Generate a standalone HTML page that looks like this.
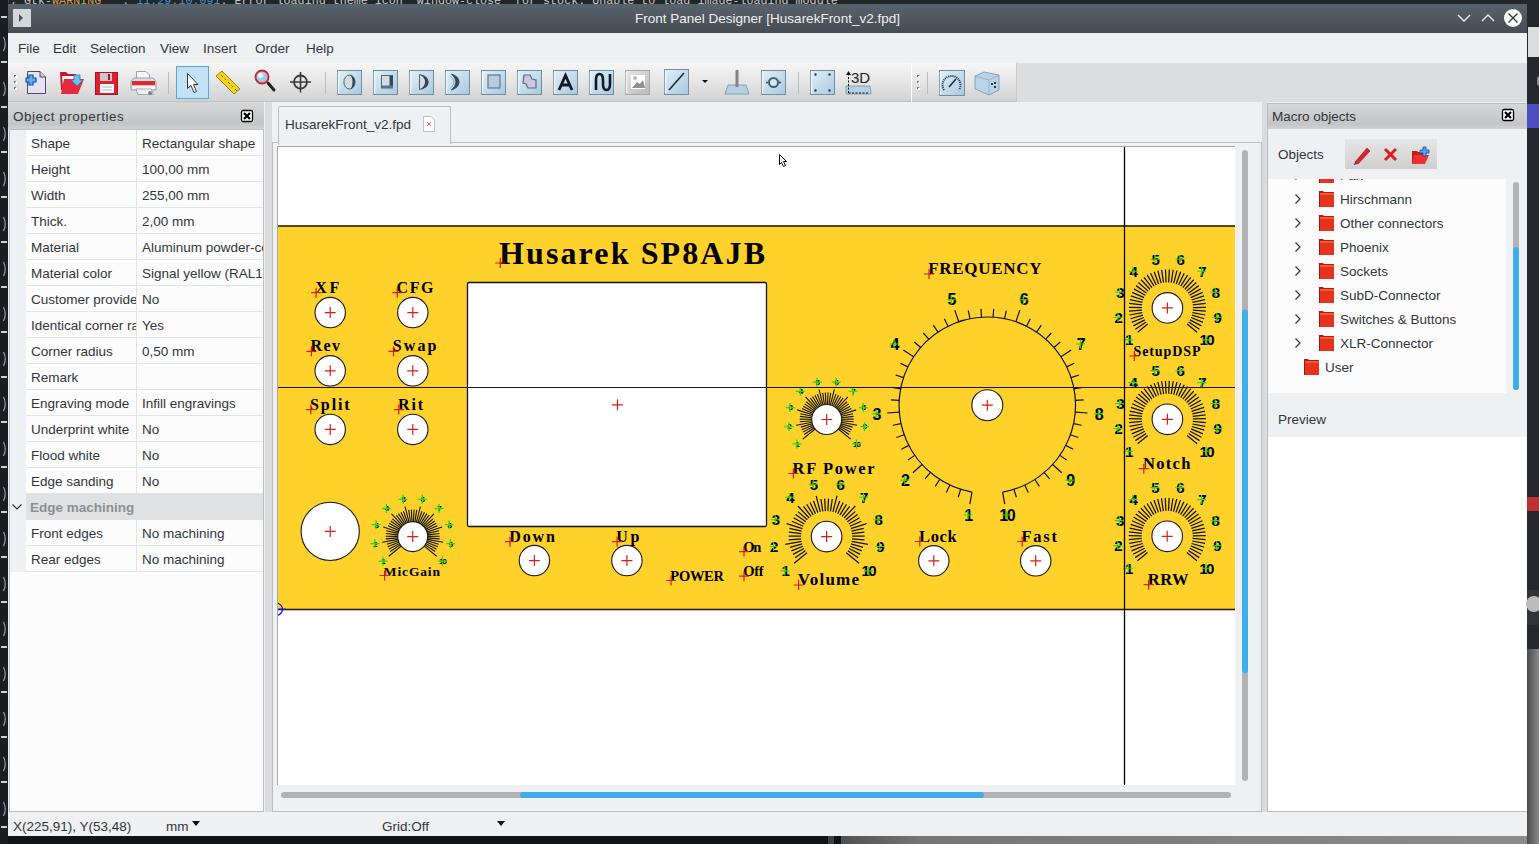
<!DOCTYPE html>
<html><head><meta charset="utf-8">
<style>
*{box-sizing:border-box}
body{margin:0;width:1539px;height:844px;position:relative;overflow:hidden;background:#1f2226;font-family:"Liberation Sans",sans-serif;font-size:13.5px;color:#31363b}
.a{position:absolute}
.t{position:absolute;white-space:nowrap;line-height:18px}
</style></head><body>
<div class="a" style="left:0;top:0;width:1539px;height:4px;overflow:hidden;background:#232629">
  <div class="t" style="left:3px;top:-8px;color:#c8c8c8;font-family:'Liberation Mono',monospace;font-size:11.7px">); Gtk-<span style="color:#d0a040">WARNING</span> **: <span style="color:#4a90d0">11:29:10.091</span>: Error loading theme icon 'window-close' for stock: Unable to load image-loading module</div>
</div>
<div class="a" style="left:8px;top:4px;width:1519px;height:832px;background:#eff0f1"></div>
<div class="a" style="left:8px;top:4px;width:1519px;height:29px;background:linear-gradient(#59626b,#454c53)"></div>
<div class="a" style="left:13px;top:9px;width:18px;height:18px;background:#d2d7dc"><div class="a" style="left:6px;top:5px;width:0;height:0;border-top:4px solid transparent;border-bottom:4px solid transparent;border-left:4px solid #4a4f55"></div></div>
<div class="t" style="left:8px;width:1519px;text-align:center;top:10px;color:#eff0f1">Front Panel Designer [HusarekFront_v2.fpd]</div>
<svg class="a" style="left:1448px;top:7px" width="79" height="22">
  <polyline points="10,8 16,14 22,8" fill="none" stroke="#eff0f1" stroke-width="1.3"/>
  <polyline points="34,14 40,8 46,14" fill="none" stroke="#eff0f1" stroke-width="1.3"/>
  <circle cx="65" cy="11" r="9" fill="#fcfcfc"/>
  <path d="M60.5,6.5L69.5,15.5M69.5,6.5L60.5,15.5" stroke="#31363b" stroke-width="1.3"/>
</svg>
<div class="t" style="left:18px;top:40px">File</div>
<div class="t" style="left:53px;top:40px">Edit</div>
<div class="t" style="left:90px;top:40px">Selection</div>
<div class="t" style="left:160px;top:40px">View</div>
<div class="t" style="left:203px;top:40px">Insert</div>
<div class="t" style="left:255px;top:40px">Order</div>
<div class="t" style="left:306px;top:40px">Help</div>
<div class="a" style="left:8px;top:63px;width:1519px;height:39px;background:#dcddde"></div>
<div class="a" style="left:8px;top:63px;width:903px;height:39px;background:linear-gradient(#f6f6f6,#e4e4e4 55%,#d2d2d2);border-bottom:1px solid #c2c2c2"></div>
<div class="a" style="left:911px;top:63px;width:1px;height:39px;background:#fff"></div>
<div class="a" style="left:912px;top:63px;width:105px;height:39px;background:linear-gradient(#f6f6f6,#e4e4e4 55%,#d2d2d2);border-bottom:1px solid #c2c2c2;border-right:1px solid #c8c8c8"></div>
<svg class="a" style="left:0;top:0" width="1539" height="110">
<defs>
<linearGradient id="bb" x1="0" y1="0" x2="1" y2="1"><stop offset="0" stop-color="#e4f0f8"/><stop offset="1" stop-color="#a9c8de"/></linearGradient>
<linearGradient id="gb" x1="0" y1="0" x2="1" y2="1"><stop offset="0" stop-color="#e8e8e8"/><stop offset="1" stop-color="#b8b8b8"/></linearGradient>
</defs>
<rect x="917" y="75" width="2" height="2" fill="#777"/>
<rect x="918" y="76" width="2" height="2" fill="#fff"/>
<rect x="14" y="75" width="2" height="2" fill="#777"/>
<rect x="15" y="76" width="2" height="2" fill="#fff"/>
<rect x="917" y="81" width="2" height="2" fill="#777"/>
<rect x="918" y="82" width="2" height="2" fill="#fff"/>
<rect x="14" y="81" width="2" height="2" fill="#777"/>
<rect x="15" y="82" width="2" height="2" fill="#fff"/>
<rect x="917" y="87" width="2" height="2" fill="#777"/>
<rect x="918" y="88" width="2" height="2" fill="#fff"/>
<rect x="14" y="87" width="2" height="2" fill="#777"/>
<rect x="15" y="88" width="2" height="2" fill="#fff"/>
<path d="M27.5,71.5H40L45.5,77V93.5H27.5Z" fill="#e6e2f6" stroke="#4a4a60" stroke-width="1"/>
<path d="M40,71.5V77H45.5" fill="#cfcbe0" stroke="#4a4a60" stroke-width="1"/>
<path d="M26,78H29V75H33V78H36V82H33V85H29V82H26Z" fill="#5ab0f0" stroke="#1c4fa0" stroke-width="1.2"/>
<path d="M60,72H66L68,74H76V90H61Z" fill="#c0182c"/>
<path d="M62,76H75V88H63Z" fill="#f4f4f4"/>
<path d="M64,79H84L78,94H61Z" fill="#e8283c"/>
<path d="M74,75H80V80H83L77,86L71,80H74Z" fill="#6ac0f0" stroke="#2a7ab0" stroke-width="0.8"/>
<rect x="95.5" y="72.5" width="22" height="22" fill="#e02030" stroke="#b01020"/>
<rect x="100" y="73" width="12" height="8" fill="#c8c8d0"/><rect x="108" y="74" width="2" height="6" fill="#b01020"/>
<rect x="100" y="84" width="14" height="9" fill="#fafafa"/><path d="M102,87H112M102,90H112" stroke="#9ab" stroke-width="0.8"/>
<path d="M136.5,71.5H146L149.5,75V82H136.5Z" fill="#f4f4fa" stroke="#8a8a98" stroke-width="0.8"/>
<path d="M131,81L134,78H153L156,81V90H131Z" fill="#d8dce6" stroke="#8890a0" stroke-width="0.8"/>
<path d="M132,81H155V85.5H132Z" fill="#e02a30"/>
<path d="M132,85.5H155V89H132Z" fill="#f0f2f8"/>
<path d="M136,89H151L153.5,94.5H138Z" fill="#f4f4f4" stroke="#8a8a98" stroke-width="0.7"/>
<circle cx="150" cy="93" r="2" fill="#7a8088"/>
<path d="M168.5,72V94" stroke="#bcbcbc" stroke-width="1"/>
<path d="M325.5,72V94" stroke="#bcbcbc" stroke-width="1"/>
<path d="M798.5,72V94" stroke="#bcbcbc" stroke-width="1"/>
<path d="M927.5,72V94" stroke="#bcbcbc" stroke-width="1"/>
<rect x="176.5" y="66.5" width="32" height="32" fill="#c2e1f5" stroke="#5ba7d9" stroke-width="1"/>
<path d="M187.5,73.5V88.5L191,85.5L194,92.5L196.5,91.5L193.5,84.5H198Z" fill="#fafafa" stroke="#3a3a3a" stroke-width="1"/>
<path d="M216,76L222,71L240,89L234,94Z" fill="#f2d21a" stroke="#9a7a00" stroke-width="0.9"/>
<path d="M221,75L223,77M224.5,78.5L226,80M228,82L230,84M231.5,85.5L233,87M235,89L237,91" stroke="#6a5a00" stroke-width="0.8"/>
<path d="M268,83L274,90" stroke="#222" stroke-width="3" stroke-linecap="round"/>
<circle cx="262" cy="77" r="6.5" fill="#9ecde8" stroke="#d02030" stroke-width="1.8"/>
<circle cx="260.5" cy="75.5" r="2.5" fill="#e8f6ff"/>
<circle cx="300.5" cy="82" r="6.5" fill="none" stroke="#3a3a3a" stroke-width="1.8"/>
<path d="M290,82H311M300.5,72V92.5" stroke="#3a3a3a" stroke-width="1.6"/>
<rect x="337.5" y="70.5" width="24" height="24" fill="url(#bb)" stroke="#6f8ea2" stroke-width="1"/>
<path d="M338.5,71.5V93.5" stroke="#f5fbff" stroke-width="1.5" opacity="0.8"/>
<rect x="373.5" y="70.5" width="24" height="24" fill="url(#bb)" stroke="#6f8ea2" stroke-width="1"/>
<path d="M374.5,71.5V93.5" stroke="#f5fbff" stroke-width="1.5" opacity="0.8"/>
<rect x="409.5" y="70.5" width="24" height="24" fill="url(#bb)" stroke="#6f8ea2" stroke-width="1"/>
<path d="M410.5,71.5V93.5" stroke="#f5fbff" stroke-width="1.5" opacity="0.8"/>
<rect x="445.5" y="70.5" width="24" height="24" fill="url(#bb)" stroke="#6f8ea2" stroke-width="1"/>
<path d="M446.5,71.5V93.5" stroke="#f5fbff" stroke-width="1.5" opacity="0.8"/>
<rect x="481.5" y="70.5" width="24" height="24" fill="url(#bb)" stroke="#6f8ea2" stroke-width="1"/>
<path d="M482.5,71.5V93.5" stroke="#f5fbff" stroke-width="1.5" opacity="0.8"/>
<rect x="517.5" y="70.5" width="24" height="24" fill="url(#bb)" stroke="#6f8ea2" stroke-width="1"/>
<path d="M518.5,71.5V93.5" stroke="#f5fbff" stroke-width="1.5" opacity="0.8"/>
<rect x="553.5" y="70.5" width="24" height="24" fill="url(#bb)" stroke="#6f8ea2" stroke-width="1"/>
<path d="M554.5,71.5V93.5" stroke="#f5fbff" stroke-width="1.5" opacity="0.8"/>
<rect x="589.5" y="70.5" width="24" height="24" fill="url(#bb)" stroke="#6f8ea2" stroke-width="1"/>
<path d="M590.5,71.5V93.5" stroke="#f5fbff" stroke-width="1.5" opacity="0.8"/>
<ellipse cx="349.5" cy="82" rx="5.6" ry="7" fill="#d6dde2" stroke="#4a6476" stroke-width="1"/>
<path d="M349.5,75A5.6,7 0 0 1 349.5,89A2.8,6.6 0 0 0 349.5,75Z" fill="#2f4a5c"/>
<rect x="381.5" y="75.5" width="11" height="12.5" fill="#d6dde2" stroke="#4a6476" stroke-width="1"/>
<path d="M389.5,76V88H393V76Z" fill="#2f4a5c"/><path d="M382,85.5H393V88H382Z" fill="#5a7486"/>
<path d="M419.5,74.5Q428,76 428,82Q428,88 419.5,89.5Z" fill="#d6dde2" stroke="#4a6476" stroke-width="1"/>
<path d="M419.5,74.5Q428.5,76 428.5,82Q428.5,88 419.5,89.5Q425,87 425,82Q425,77 419.5,74.5Z" fill="#2f4a5c"/>
<path d="M451.5,74Q459,76.5 459,82Q459,87.5 451.5,90Q456,86 456,82Q456,78 451.5,74Z" fill="#2f4a5c" stroke="#2f4a5c" stroke-width="1"/>
<path d="M450,75.5Q454,79 454,82Q454,85 450,88.5" fill="none" stroke="#8aa2b2" stroke-width="1"/>
<rect x="488" y="75" width="12" height="13" fill="#b4ccdc" stroke="#5a7a8e" stroke-width="1.2"/>
<path d="M524,75H530L532,79L536,80V88H528L526,84L523,83Z" fill="#c8c8e0" stroke="#5a6a8e" stroke-width="1.2"/>
<path d="M559,90L565.5,75.5L572,90M561.5,85H569.5" fill="none" stroke="#0e1a28" stroke-width="2.8"/>
<path d="M596,90V80Q596,74 599.5,74Q603,74 603,80V84Q603,90 606.5,90Q610,90 610,84V74" fill="none" stroke="#0e1a28" stroke-width="2.6"/>
<rect x="625.5" y="70.5" width="24" height="24" fill="url(#gb)" stroke="#a8a8a8" stroke-width="1"/>
<path d="M626.5,71.5V93.5" stroke="#f5fbff" stroke-width="1.5" opacity="0.8"/>
<rect x="631" y="75" width="14" height="14" fill="#fff"/><path d="M632,88L637,82L640,84L643,80L645,88Z" fill="#909090"/><circle cx="635" cy="78" r="2" fill="#bbb"/>
<rect x="664.5" y="69.5" width="24" height="25" fill="url(#bb)" stroke="#6f8ea2" stroke-width="1"/>
<path d="M665.5,70.5V93.5" stroke="#f5fbff" stroke-width="1.5" opacity="0.8"/>
<path d="M669,90L684,73" stroke="#1a2a3a" stroke-width="1.6"/>
<path d="M702,80H708L705,83Z" fill="#111"/>
<path d="M728,85H746L749,94H725Z" fill="#b4d0e4" stroke="#7893a6" stroke-width="0.8"/>
<rect x="735.5" y="70" width="3" height="17" fill="#808488"/>
<rect x="761.5" y="70.5" width="24" height="24" fill="url(#bb)" stroke="#6f8ea2" stroke-width="1"/>
<path d="M762.5,71.5V93.5" stroke="#f5fbff" stroke-width="1.5" opacity="0.8"/>
<circle cx="773.5" cy="82.5" r="4.5" fill="#d8e8f2" stroke="#3f6074" stroke-width="2"/>
<circle cx="767" cy="82.5" r="1" fill="#2a3a4a"/><circle cx="780" cy="82.5" r="1" fill="#2a3a4a"/>
<rect x="810.5" y="70.5" width="24" height="24" fill="url(#bb)" stroke="#6f8ea2" stroke-width="1"/>
<path d="M811.5,71.5V93.5" stroke="#f5fbff" stroke-width="1.5" opacity="0.8"/>
<circle cx="815.5" cy="74.5" r="1.2" fill="#2a3a4a"/>
<circle cx="829.5" cy="74.5" r="1.2" fill="#2a3a4a"/>
<circle cx="815.5" cy="90.5" r="1.2" fill="#2a3a4a"/>
<circle cx="829.5" cy="90.5" r="1.2" fill="#2a3a4a"/>
<path d="M846,86H870L871,94H846Z" fill="#b4d0e4" stroke="#7893a6" stroke-width="0.8"/>
<path d="M848.5,93V73M848.5,93H869" fill="none" stroke="#111" stroke-width="1" stroke-dasharray="2,1.5"/>
<path d="M846,75L848.5,71L851,75Z" fill="#111"/>
<text x="851" y="83" font-family="Liberation Sans" font-size="15" fill="#222">3D</text>
<rect x="939.5" y="70.5" width="25" height="25" fill="url(#bb)" stroke="#6f8ea2" stroke-width="1"/>
<path d="M940.5,71.5V94.5" stroke="#f5fbff" stroke-width="1.5" opacity="0.8"/>
<path d="M944,90A9,9 0 1 1 959,90" fill="none" stroke="#1a2a3a" stroke-width="2" stroke-dasharray="1,1"/>
<path d="M949,87L956,79" stroke="#1a2a3a" stroke-width="1.5"/>
<path d="M975,76L984,72L999,75V90L989,95L975,89Z" fill="#b8d4e8" stroke="#7893a6" stroke-width="0.8"/>
<path d="M989,80V95M975,76L989,80L999,75" fill="none" stroke="#8aa8bc" stroke-width="0.8"/>
<rect x="991" y="83" width="2" height="2" fill="#334"/><rect x="994" y="82" width="2" height="2" fill="#334"/><rect x="994" y="86" width="2" height="2" fill="#334"/>
</svg>
<!-- left dock -->
<div class="a" style="left:8px;top:102px;width:256px;height:27px;background:linear-gradient(#d6d7d8,#c4c5c6 80%,#d0d1d2)"></div>
<div class="t" style="left:13px;top:108px;letter-spacing:0.5px">Object properties</div>
<svg class="a" style="left:240px;top:109px" width="14" height="14"><rect x="1.5" y="1.5" width="11" height="11" rx="1.5" fill="#fff" stroke="#000" stroke-width="1.3"/><path d="M4,4L10,10M10,4L4,10" stroke="#000" stroke-width="2.2"/></svg>
<div class="a" style="left:9px;top:129px;width:255px;height:683px;background:#fcfcfc;border:1px solid #bcbdbe"></div>
<div class="a" style="left:10px;top:130px;width:16px;height:442px;background:#eff0f1"></div>
<div class="a" style="left:26px;top:155px;width:237px;height:1px;background:#e3e4e5"></div>
<div class="a" style="left:136px;top:130px;width:1px;height:26px;background:#e3e4e5"></div>
<div class="a" style="left:26px;top:130px;width:110px;height:26px;overflow:hidden"><div class="t" style="left:5px;top:5px">Shape</div></div>
<div class="a" style="left:137px;top:130px;width:126px;height:26px;overflow:hidden"><div class="t" style="left:5px;top:5px">Rectangular shape</div></div>
<div class="a" style="left:26px;top:181px;width:237px;height:1px;background:#e3e4e5"></div>
<div class="a" style="left:136px;top:156px;width:1px;height:26px;background:#e3e4e5"></div>
<div class="a" style="left:26px;top:156px;width:110px;height:26px;overflow:hidden"><div class="t" style="left:5px;top:5px">Height</div></div>
<div class="a" style="left:137px;top:156px;width:126px;height:26px;overflow:hidden"><div class="t" style="left:5px;top:5px">100,00 mm</div></div>
<div class="a" style="left:26px;top:207px;width:237px;height:1px;background:#e3e4e5"></div>
<div class="a" style="left:136px;top:182px;width:1px;height:26px;background:#e3e4e5"></div>
<div class="a" style="left:26px;top:182px;width:110px;height:26px;overflow:hidden"><div class="t" style="left:5px;top:5px">Width</div></div>
<div class="a" style="left:137px;top:182px;width:126px;height:26px;overflow:hidden"><div class="t" style="left:5px;top:5px">255,00 mm</div></div>
<div class="a" style="left:26px;top:233px;width:237px;height:1px;background:#e3e4e5"></div>
<div class="a" style="left:136px;top:208px;width:1px;height:26px;background:#e3e4e5"></div>
<div class="a" style="left:26px;top:208px;width:110px;height:26px;overflow:hidden"><div class="t" style="left:5px;top:5px">Thick.</div></div>
<div class="a" style="left:137px;top:208px;width:126px;height:26px;overflow:hidden"><div class="t" style="left:5px;top:5px">2,00 mm</div></div>
<div class="a" style="left:26px;top:259px;width:237px;height:1px;background:#e3e4e5"></div>
<div class="a" style="left:136px;top:234px;width:1px;height:26px;background:#e3e4e5"></div>
<div class="a" style="left:26px;top:234px;width:110px;height:26px;overflow:hidden"><div class="t" style="left:5px;top:5px">Material</div></div>
<div class="a" style="left:137px;top:234px;width:126px;height:26px;overflow:hidden"><div class="t" style="left:5px;top:5px">Aluminum powder-coated</div></div>
<div class="a" style="left:26px;top:285px;width:237px;height:1px;background:#e3e4e5"></div>
<div class="a" style="left:136px;top:260px;width:1px;height:26px;background:#e3e4e5"></div>
<div class="a" style="left:26px;top:260px;width:110px;height:26px;overflow:hidden"><div class="t" style="left:5px;top:5px">Material color</div></div>
<div class="a" style="left:137px;top:260px;width:126px;height:26px;overflow:hidden"><div class="t" style="left:5px;top:5px">Signal yellow (RAL1003)</div></div>
<div class="a" style="left:26px;top:311px;width:237px;height:1px;background:#e3e4e5"></div>
<div class="a" style="left:136px;top:286px;width:1px;height:26px;background:#e3e4e5"></div>
<div class="a" style="left:26px;top:286px;width:110px;height:26px;overflow:hidden"><div class="t" style="left:5px;top:5px">Customer provided</div></div>
<div class="a" style="left:137px;top:286px;width:126px;height:26px;overflow:hidden"><div class="t" style="left:5px;top:5px">No</div></div>
<div class="a" style="left:26px;top:337px;width:237px;height:1px;background:#e3e4e5"></div>
<div class="a" style="left:136px;top:312px;width:1px;height:26px;background:#e3e4e5"></div>
<div class="a" style="left:26px;top:312px;width:110px;height:26px;overflow:hidden"><div class="t" style="left:5px;top:5px">Identical corner radii</div></div>
<div class="a" style="left:137px;top:312px;width:126px;height:26px;overflow:hidden"><div class="t" style="left:5px;top:5px">Yes</div></div>
<div class="a" style="left:26px;top:363px;width:237px;height:1px;background:#e3e4e5"></div>
<div class="a" style="left:136px;top:338px;width:1px;height:26px;background:#e3e4e5"></div>
<div class="a" style="left:26px;top:338px;width:110px;height:26px;overflow:hidden"><div class="t" style="left:5px;top:5px">Corner radius</div></div>
<div class="a" style="left:137px;top:338px;width:126px;height:26px;overflow:hidden"><div class="t" style="left:5px;top:5px">0,50 mm</div></div>
<div class="a" style="left:26px;top:389px;width:237px;height:1px;background:#e3e4e5"></div>
<div class="a" style="left:136px;top:364px;width:1px;height:26px;background:#e3e4e5"></div>
<div class="a" style="left:26px;top:364px;width:110px;height:26px;overflow:hidden"><div class="t" style="left:5px;top:5px">Remark</div></div>
<div class="a" style="left:137px;top:364px;width:126px;height:26px;overflow:hidden"><div class="t" style="left:5px;top:5px"></div></div>
<div class="a" style="left:26px;top:415px;width:237px;height:1px;background:#e3e4e5"></div>
<div class="a" style="left:136px;top:390px;width:1px;height:26px;background:#e3e4e5"></div>
<div class="a" style="left:26px;top:390px;width:110px;height:26px;overflow:hidden"><div class="t" style="left:5px;top:5px">Engraving mode</div></div>
<div class="a" style="left:137px;top:390px;width:126px;height:26px;overflow:hidden"><div class="t" style="left:5px;top:5px">Infill engravings</div></div>
<div class="a" style="left:26px;top:441px;width:237px;height:1px;background:#e3e4e5"></div>
<div class="a" style="left:136px;top:416px;width:1px;height:26px;background:#e3e4e5"></div>
<div class="a" style="left:26px;top:416px;width:110px;height:26px;overflow:hidden"><div class="t" style="left:5px;top:5px">Underprint white</div></div>
<div class="a" style="left:137px;top:416px;width:126px;height:26px;overflow:hidden"><div class="t" style="left:5px;top:5px">No</div></div>
<div class="a" style="left:26px;top:467px;width:237px;height:1px;background:#e3e4e5"></div>
<div class="a" style="left:136px;top:442px;width:1px;height:26px;background:#e3e4e5"></div>
<div class="a" style="left:26px;top:442px;width:110px;height:26px;overflow:hidden"><div class="t" style="left:5px;top:5px">Flood white</div></div>
<div class="a" style="left:137px;top:442px;width:126px;height:26px;overflow:hidden"><div class="t" style="left:5px;top:5px">No</div></div>
<div class="a" style="left:26px;top:493px;width:237px;height:1px;background:#e3e4e5"></div>
<div class="a" style="left:136px;top:468px;width:1px;height:26px;background:#e3e4e5"></div>
<div class="a" style="left:26px;top:468px;width:110px;height:26px;overflow:hidden"><div class="t" style="left:5px;top:5px">Edge sanding</div></div>
<div class="a" style="left:137px;top:468px;width:126px;height:26px;overflow:hidden"><div class="t" style="left:5px;top:5px">No</div></div>
<div class="a" style="left:26px;top:494px;width:237px;height:26px;background:#e0e1e2"></div>
<svg class="a" style="left:11px;top:502px" width="12" height="10"><path d="M1.5,2.5L6,7L10.5,2.5" fill="none" stroke="#31363b" stroke-width="1.2"/></svg>
<div class="t" style="left:30px;top:499px;color:#8c8f92;font-weight:bold">Edge machining</div>
<div class="a" style="left:26px;top:545px;width:237px;height:1px;background:#e3e4e5"></div>
<div class="a" style="left:136px;top:520px;width:1px;height:26px;background:#e3e4e5"></div>
<div class="a" style="left:26px;top:520px;width:110px;height:26px;overflow:hidden"><div class="t" style="left:5px;top:5px">Front edges</div></div>
<div class="a" style="left:137px;top:520px;width:126px;height:26px;overflow:hidden"><div class="t" style="left:5px;top:5px">No machining</div></div>
<div class="a" style="left:26px;top:571px;width:237px;height:1px;background:#e3e4e5"></div>
<div class="a" style="left:136px;top:546px;width:1px;height:26px;background:#e3e4e5"></div>
<div class="a" style="left:26px;top:546px;width:110px;height:26px;overflow:hidden"><div class="t" style="left:5px;top:5px">Rear edges</div></div>
<div class="a" style="left:137px;top:546px;width:126px;height:26px;overflow:hidden"><div class="t" style="left:5px;top:5px">No machining</div></div>
<!-- splitter -->
<div class="a" style="left:265px;top:102px;width:7px;height:710px;background:#dadbdc"></div>
<!-- central -->
<div class="a" style="left:272px;top:142px;width:990px;height:670px;border:1px solid #bcbdbe;background:#eff0f1"></div>
<div class="a" style="left:278px;top:106px;width:173px;height:38px;background:#eff0f1;border:1px solid #bcbdbe;border-bottom:none;border-radius:2px 2px 0 0"></div>
<div class="t" style="left:285px;top:116px">HusarekFront_v2.fpd</div>
<svg class="a" style="left:421px;top:115px" width="16" height="18"><path d="M2.5,1.5H10L13.5,5V16.5H2.5Z" fill="#fafafa" stroke="#c0c0c0"/><path d="M6,7L10,11M10,7L6,11" stroke="#e06060" stroke-width="1"/></svg>
<svg class="a" style="left:0;top:0" width="1539" height="844">
<defs><clipPath id="cv"><rect x="278" y="147" width="957" height="638"/></clipPath></defs>
<rect x="277" y="146" width="958" height="639" fill="#fff"/>
<path d="M277.5,785V146.5H1235" fill="none" stroke="#a8a9aa" stroke-width="1"/>
<g clip-path="url(#cv)" font-family="Liberation Serif" font-weight="bold" fill="#000">
<rect x="260" y="226" width="990" height="383.5" fill="#ffd12b" stroke="#2b2000" stroke-width="1.6"/>
<rect x="467.5" y="282.5" width="299" height="244" rx="1.5" fill="#fff" stroke="#111" stroke-width="1.3"/>
<path d="M612,404.8H623M617.5,399.3V410.3" stroke="#dc1c1c" stroke-width="1.2"/>
<circle cx="330.2" cy="312.6" r="15.2" fill="#fff" stroke="#1a1a1a" stroke-width="1.1"/>
<path d="M324.7,312.6H335.7M330.2,307.1V318.1" stroke="#dc1c1c" stroke-width="1.2"/>
<circle cx="412.8" cy="312.6" r="15.2" fill="#fff" stroke="#1a1a1a" stroke-width="1.1"/>
<path d="M407.3,312.6H418.3M412.8,307.1V318.1" stroke="#dc1c1c" stroke-width="1.2"/>
<circle cx="330.2" cy="370.8" r="15.2" fill="#fff" stroke="#1a1a1a" stroke-width="1.1"/>
<path d="M324.7,370.8H335.7M330.2,365.3V376.3" stroke="#dc1c1c" stroke-width="1.2"/>
<circle cx="412.8" cy="370.8" r="15.2" fill="#fff" stroke="#1a1a1a" stroke-width="1.1"/>
<path d="M407.3,370.8H418.3M412.8,365.3V376.3" stroke="#dc1c1c" stroke-width="1.2"/>
<circle cx="330.2" cy="429.4" r="15.2" fill="#fff" stroke="#1a1a1a" stroke-width="1.1"/>
<path d="M324.7,429.4H335.7M330.2,423.9V434.9" stroke="#dc1c1c" stroke-width="1.2"/>
<circle cx="412.8" cy="429.4" r="15.2" fill="#fff" stroke="#1a1a1a" stroke-width="1.1"/>
<path d="M407.3,429.4H418.3M412.8,423.9V434.9" stroke="#dc1c1c" stroke-width="1.2"/>
<circle cx="534.4" cy="560.6" r="15.2" fill="#fff" stroke="#1a1a1a" stroke-width="1.1"/>
<path d="M528.9,560.6H539.9M534.4,555.1V566.1" stroke="#dc1c1c" stroke-width="1.2"/>
<circle cx="626.9" cy="560.6" r="15.2" fill="#fff" stroke="#1a1a1a" stroke-width="1.1"/>
<path d="M621.4,560.6H632.4M626.9,555.1V566.1" stroke="#dc1c1c" stroke-width="1.2"/>
<circle cx="933.8" cy="560.8" r="15.2" fill="#fff" stroke="#1a1a1a" stroke-width="1.1"/>
<path d="M928.3,560.8H939.3M933.8,555.3V566.3" stroke="#dc1c1c" stroke-width="1.2"/>
<circle cx="1035.7" cy="560.8" r="15.2" fill="#fff" stroke="#1a1a1a" stroke-width="1.1"/>
<path d="M1030.2,560.8H1041.2M1035.7,555.3V566.3" stroke="#dc1c1c" stroke-width="1.2"/>
<circle cx="330.2" cy="531.4" r="29.1" fill="#fff" stroke="#1a1a1a" stroke-width="1.1"/>
<path d="M324.7,531.4H335.7M330.2,525.9V536.9" stroke="#dc1c1c" stroke-width="1.2"/>
<text x="499" y="263.6" font-size="32" text-anchor="start" textLength="266" lengthAdjust="spacing">Husarek SP8AJB</text>
<path d="M495.3,263H505.3M500.3,258V268" stroke="#dc1c1c" stroke-width="1.2"/>
<text x="315.3" y="292.7" font-size="16" text-anchor="start" textLength="24" lengthAdjust="spacing">XF</text>
<path d="M311.1,292.7H321.1M316.1,287.7V297.7" stroke="#dc1c1c" stroke-width="1.2"/>
<text x="396.5" y="292.7" font-size="16" text-anchor="start" textLength="37" lengthAdjust="spacing">CFG</text>
<path d="M392.3,292.7H402.3M397.3,287.7V297.7" stroke="#dc1c1c" stroke-width="1.2"/>
<text x="310.6" y="351.3" font-size="16" text-anchor="start" textLength="29.5" lengthAdjust="spacing">Rev</text>
<path d="M306.4,351.3H316.4M311.4,346.3V356.3" stroke="#dc1c1c" stroke-width="1.2"/>
<text x="392.7" y="351.3" font-size="16" text-anchor="start" textLength="43.8" lengthAdjust="spacing">Swap</text>
<path d="M388.5,351.3H398.5M393.5,346.3V356.3" stroke="#dc1c1c" stroke-width="1.2"/>
<text x="310" y="409.6" font-size="16" text-anchor="start" textLength="39.7" lengthAdjust="spacing">Split</text>
<path d="M305.8,409.6H315.8M310.8,404.6V414.6" stroke="#dc1c1c" stroke-width="1.2"/>
<text x="398" y="409.6" font-size="16" text-anchor="start" textLength="25" lengthAdjust="spacing">Rit</text>
<path d="M393.8,409.6H403.8M398.8,404.6V414.6" stroke="#dc1c1c" stroke-width="1.2"/>
<text x="509.2" y="541.7" font-size="16" text-anchor="start" textLength="45.8" lengthAdjust="spacing">Down</text>
<path d="M505,541.7H515M510,536.7V546.7" stroke="#dc1c1c" stroke-width="1.2"/>
<text x="616.3" y="541.7" font-size="16" text-anchor="start" textLength="23.2" lengthAdjust="spacing">Up</text>
<path d="M612.1,541.7H622.1M617.1,536.7V546.7" stroke="#dc1c1c" stroke-width="1.2"/>
<text x="670.3" y="580.5" font-size="14.5" text-anchor="start" textLength="53.7" lengthAdjust="spacing">POWER</text>
<path d="M666.1,580.5H676.1M671.1,575.5V585.5" stroke="#dc1c1c" stroke-width="1.2"/>
<text x="743.2" y="551.6" font-size="14.5" text-anchor="start" textLength="18.2" lengthAdjust="spacing">On</text>
<path d="M739,551.6H749M744,546.6V556.6" stroke="#dc1c1c" stroke-width="1.2"/>
<text x="743.2" y="576.2" font-size="14.5" text-anchor="start" textLength="20.5" lengthAdjust="spacing">Off</text>
<path d="M739,576.2H749M744,571.2V581.2" stroke="#dc1c1c" stroke-width="1.2"/>
<text x="928.2" y="274" font-size="17" text-anchor="start" textLength="113.3" lengthAdjust="spacing">FREQUENCY</text>
<path d="M924,274H934M929,269V279" stroke="#dc1c1c" stroke-width="1.2"/>
<text x="792.6" y="473.5" font-size="16.5" text-anchor="start" textLength="82" lengthAdjust="spacing">RF Power</text>
<path d="M788.4,473.5H798.4M793.4,468.5V478.5" stroke="#dc1c1c" stroke-width="1.2"/>
<text x="797.8" y="585" font-size="17" text-anchor="start" textLength="61.2" lengthAdjust="spacing">Volume</text>
<path d="M793.6,585H803.6M798.6,580V590" stroke="#dc1c1c" stroke-width="1.2"/>
<text x="919" y="541.5" font-size="16.5" text-anchor="start" textLength="37.8" lengthAdjust="spacing">Lock</text>
<path d="M914.8,541.5H924.8M919.8,536.5V546.5" stroke="#dc1c1c" stroke-width="1.2"/>
<text x="1021.4" y="541.5" font-size="16.5" text-anchor="start" textLength="35.6" lengthAdjust="spacing">Fast</text>
<path d="M1017.2,541.5H1027.2M1022.2,536.5V546.5" stroke="#dc1c1c" stroke-width="1.2"/>
<text x="383.8" y="575.5" font-size="13.5" text-anchor="start" textLength="56.2" lengthAdjust="spacing">MicGain</text>
<path d="M379.6,575.5H389.6M384.6,570.5V580.5" stroke="#dc1c1c" stroke-width="1.2"/>
<text x="1133.5" y="356" font-size="14" text-anchor="start" textLength="67" lengthAdjust="spacing">SetupDSP</text>
<path d="M1129.3,356H1139.3M1134.3,351V361" stroke="#dc1c1c" stroke-width="1.2"/>
<text x="1143" y="468.7" font-size="16.5" text-anchor="start" textLength="47.4" lengthAdjust="spacing">Notch</text>
<path d="M1138.8,468.7H1148.8M1143.8,463.7V473.7" stroke="#dc1c1c" stroke-width="1.2"/>
<text x="1147.8" y="584.7" font-size="16.5" text-anchor="start" textLength="40.7" lengthAdjust="spacing">RRW</text>
<path d="M1143.6,584.7H1153.6M1148.6,579.7V589.7" stroke="#dc1c1c" stroke-width="1.2"/>
<path d="M971.98,492.06 A88.2,88.2 0 1 1 1002.62,492.06" fill="none" stroke="#111" stroke-width="1.2"/>
<path d="M971.98,492.06L969.85,504.17M960.7,489.29L958.19,497.21M949.87,485.06L946.35,492.58M939.69,479.45L935.21,486.44M930.34,472.54L924.98,478.88M921.98,464.47L912.88,472.74M914.76,455.37L907.93,460.09M908.79,445.39L901.4,449.18M904.19,434.72L896.37,437.5M901.03,423.54L892.91,425.26M899.37,412.03L887.1,412.99M899.23,400.41L890.94,399.96M900.62,388.87L892.47,387.34M903.52,377.62L895.64,375.02M907.88,366.84L900.4,363.23M913.61,356.73L903.33,349.97M920.62,347.46L914.35,342.03M928.79,339.2L923.29,332.99M937.98,332.08L933.34,325.2M948.02,326.23L944.33,318.8M958.75,321.75L954.76,310.11M969.97,318.72L968.34,310.58M981.49,317.19L980.94,308.91M993.11,317.19L993.66,308.91M1004.63,318.72L1006.26,310.58M1015.85,321.75L1019.84,310.11M1026.58,326.23L1030.27,318.8M1036.62,332.08L1041.26,325.2M1045.81,339.2L1051.31,332.99M1053.98,347.46L1060.25,342.03M1060.99,356.73L1071.27,349.97M1066.72,366.84L1074.2,363.23M1071.08,377.62L1078.96,375.02M1073.98,388.87L1082.13,387.34M1075.37,400.41L1083.66,399.96M1075.23,412.03L1087.5,412.99M1073.57,423.54L1081.69,425.26M1070.41,434.72L1078.23,437.5M1065.81,445.39L1073.2,449.18M1059.84,455.37L1066.67,460.09M1052.62,464.47L1061.72,472.74M1044.26,472.54L1049.62,478.88M1034.91,479.45L1039.39,486.44M1024.73,485.06L1028.25,492.58M1013.9,489.29L1016.41,497.21M1002.62,492.06L1004.75,504.17" stroke="#111" stroke-width="1.2"/>
<text x="967.94" y="520.77" font-family="Liberation Sans" font-size="16" text-anchor="middle" letter-spacing="-1.5">1</text>
<path d="M963.44,515.01H972.44M967.94,510.51V519.51" stroke="#22dd22" stroke-width="1.1"/>
<text x="904.73" y="485.89" font-family="Liberation Sans" font-size="16" text-anchor="middle" letter-spacing="-1.5">2</text>
<path d="M900.23,480.13H909.23M904.73,475.63V484.63" stroke="#22dd22" stroke-width="1.1"/>
<text x="876.14" y="419.6" font-family="Liberation Sans" font-size="16" text-anchor="middle" letter-spacing="-1.5">3</text>
<path d="M871.64,413.84H880.64M876.14,409.34V418.34" stroke="#22dd22" stroke-width="1.1"/>
<text x="894.14" y="349.69" font-family="Liberation Sans" font-size="16" text-anchor="middle" letter-spacing="-1.5">4</text>
<path d="M889.64,343.93H898.64M894.14,339.43V348.43" stroke="#22dd22" stroke-width="1.1"/>
<text x="951.2" y="305.46" font-family="Liberation Sans" font-size="16" text-anchor="middle" letter-spacing="-1.5">5</text>
<path d="M946.7,299.7H955.7M951.2,295.2V304.2" stroke="#22dd22" stroke-width="1.1"/>
<text x="1023.4" y="305.46" font-family="Liberation Sans" font-size="16" text-anchor="middle" letter-spacing="-1.5">6</text>
<path d="M1018.9,299.7H1027.9M1023.4,295.2V304.2" stroke="#22dd22" stroke-width="1.1"/>
<text x="1080.46" y="349.69" font-family="Liberation Sans" font-size="16" text-anchor="middle" letter-spacing="-1.5">7</text>
<path d="M1075.96,343.93H1084.96M1080.46,339.43V348.43" stroke="#22dd22" stroke-width="1.1"/>
<text x="1098.46" y="419.6" font-family="Liberation Sans" font-size="16" text-anchor="middle" letter-spacing="-1.5">8</text>
<path d="M1093.96,413.84H1102.96M1098.46,409.34V418.34" stroke="#22dd22" stroke-width="1.1"/>
<text x="1069.87" y="485.89" font-family="Liberation Sans" font-size="16" text-anchor="middle" letter-spacing="-1.5">9</text>
<path d="M1065.37,480.13H1074.37M1069.87,475.63V484.63" stroke="#22dd22" stroke-width="1.1"/>
<text x="1006.66" y="520.77" font-family="Liberation Sans" font-size="16" text-anchor="middle" letter-spacing="-1.5">10</text>
<path d="M1002.16,515.01H1011.16M1006.66,510.51V519.51" stroke="#22dd22" stroke-width="1.1"/>
<circle cx="987.3" cy="405.2" r="15.5" fill="#fff" stroke="#1a1a1a" stroke-width="1.1"/>
<path d="M981.8,405.2H992.8M987.3,399.7V410.7" stroke="#dc1c1c" stroke-width="1.2"/>
<path d="M401.11,546.12L388.75,556.28M400.21,544.91L390.22,551.56M399.44,543.62L388.84,549.23M398.81,542.25L387.69,546.78M398.31,540.83L386.8,544.22M397.96,539.37L382.23,542.33M397.75,537.88L385.8,538.9M397.7,536.38L385.7,536.2M397.8,534.87L385.88,533.49M398.05,533.39L386.33,530.82M398.44,531.94L383.24,526.96M398.98,530.53L388.01,525.68M399.66,529.19L389.23,523.26M400.47,527.92L390.68,520.97M401.4,526.74L392.36,518.85M402.44,525.65L391.51,513.98M403.59,524.68L396.31,515.15M404.83,523.83L398.54,513.61M406.15,523.1L400.91,512.31M407.54,522.52L403.41,511.25M408.98,522.07L405,506.57M410.45,521.77L408.65,509.91M411.95,521.62L411.35,509.63M413.45,521.62L414.05,509.63M414.95,521.77L416.75,509.91M416.42,522.07L420.4,506.57M417.86,522.52L421.99,511.25M419.25,523.1L424.49,512.31M420.57,523.83L426.86,513.61M421.81,524.68L429.09,515.15M422.96,525.65L433.89,513.98M424,526.74L433.04,518.85M424.93,527.92L434.72,520.97M425.74,529.19L436.17,523.26M426.42,530.53L437.39,525.68M426.96,531.94L442.16,526.96M427.35,533.39L439.07,530.82M427.6,534.87L439.52,533.49M427.7,536.38L439.7,536.2M427.65,537.88L439.6,538.9M427.44,539.37L443.17,542.33M427.09,540.83L438.6,544.22M426.59,542.25L437.71,546.78M425.96,543.62L436.56,549.23M425.19,544.91L435.18,551.56M424.29,546.12L436.65,556.28" stroke="#111" stroke-width="1.1"/>
<text x="382.95" y="563.92" font-family="Liberation Sans" font-size="8" text-anchor="middle" letter-spacing="-1">1</text>
<path d="M378.45,561.04H387.45M382.95,556.54V565.54" stroke="#22dd22" stroke-width="1.3"/>
<text x="374.86" y="546.59" font-family="Liberation Sans" font-size="8" text-anchor="middle" letter-spacing="-1">2</text>
<path d="M370.36,543.71H379.36M374.86,539.21V548.21" stroke="#22dd22" stroke-width="1.3"/>
<text x="376.11" y="527.51" font-family="Liberation Sans" font-size="8" text-anchor="middle" letter-spacing="-1">3</text>
<path d="M371.61,524.63H380.61M376.11,520.13V529.13" stroke="#22dd22" stroke-width="1.3"/>
<text x="386.38" y="511.38" font-family="Liberation Sans" font-size="8" text-anchor="middle" letter-spacing="-1">4</text>
<path d="M381.88,508.5H390.88M386.38,504V513" stroke="#22dd22" stroke-width="1.3"/>
<text x="403.14" y="502.19" font-family="Liberation Sans" font-size="8" text-anchor="middle" letter-spacing="-1">5</text>
<path d="M398.64,499.31H407.64M403.14,494.81V503.81" stroke="#22dd22" stroke-width="1.3"/>
<text x="422.26" y="502.19" font-family="Liberation Sans" font-size="8" text-anchor="middle" letter-spacing="-1">6</text>
<path d="M417.76,499.31H426.76M422.26,494.81V503.81" stroke="#22dd22" stroke-width="1.3"/>
<text x="439.02" y="511.38" font-family="Liberation Sans" font-size="8" text-anchor="middle" letter-spacing="-1">7</text>
<path d="M434.52,508.5H443.52M439.02,504V513" stroke="#22dd22" stroke-width="1.3"/>
<text x="449.29" y="527.51" font-family="Liberation Sans" font-size="8" text-anchor="middle" letter-spacing="-1">8</text>
<path d="M444.79,524.63H453.79M449.29,520.13V529.13" stroke="#22dd22" stroke-width="1.3"/>
<text x="450.54" y="546.59" font-family="Liberation Sans" font-size="8" text-anchor="middle" letter-spacing="-1">9</text>
<path d="M446.04,543.71H455.04M450.54,539.21V548.21" stroke="#22dd22" stroke-width="1.3"/>
<text x="442.45" y="563.92" font-family="Liberation Sans" font-size="8" text-anchor="middle" letter-spacing="-1">10</text>
<path d="M437.95,561.04H446.95M442.45,556.54V565.54" stroke="#22dd22" stroke-width="1.3"/>
<circle cx="412.7" cy="536.6" r="15" fill="#fff" stroke="#1a1a1a" stroke-width="1.1"/>
<path d="M407.2,536.6H418.2M412.7,531.1V542.1" stroke="#dc1c1c" stroke-width="1.2"/>
<path d="M815.11,429.02L802.75,439.18M814.21,427.81L804.22,434.46M813.44,426.52L802.84,432.13M812.81,425.15L801.69,429.68M812.31,423.73L800.8,427.12M811.96,422.27L796.23,425.23M811.75,420.78L799.8,421.8M811.7,419.28L799.7,419.1M811.8,417.77L799.88,416.39M812.05,416.29L800.33,413.72M812.44,414.84L797.24,409.86M812.98,413.43L802.01,408.58M813.66,412.09L803.23,406.16M814.47,410.82L804.68,403.87M815.4,409.64L806.36,401.75M816.44,408.55L805.51,396.88M817.59,407.58L810.31,398.05M818.83,406.73L812.54,396.51M820.15,406L814.91,395.21M821.54,405.42L817.41,394.15M822.98,404.97L819,389.47M824.45,404.67L822.65,392.81M825.95,404.52L825.35,392.53M827.45,404.52L828.05,392.53M828.95,404.67L830.75,392.81M830.42,404.97L834.4,389.47M831.86,405.42L835.99,394.15M833.25,406L838.49,395.21M834.57,406.73L840.86,396.51M835.81,407.58L843.09,398.05M836.96,408.55L847.89,396.88M838,409.64L847.04,401.75M838.93,410.82L848.72,403.87M839.74,412.09L850.17,406.16M840.42,413.43L851.39,408.58M840.96,414.84L856.16,409.86M841.35,416.29L853.07,413.72M841.6,417.77L853.52,416.39M841.7,419.28L853.7,419.1M841.65,420.78L853.6,421.8M841.44,422.27L857.17,425.23M841.09,423.73L852.6,427.12M840.59,425.15L851.71,429.68M839.96,426.52L850.56,432.13M839.19,427.81L849.18,434.46M838.29,429.02L850.65,439.18" stroke="#111" stroke-width="1.1"/>
<text x="796.95" y="446.82" font-family="Liberation Sans" font-size="8" text-anchor="middle" letter-spacing="-1">1</text>
<path d="M792.45,443.94H801.45M796.95,439.44V448.44" stroke="#22dd22" stroke-width="1.3"/>
<text x="788.86" y="429.49" font-family="Liberation Sans" font-size="8" text-anchor="middle" letter-spacing="-1">2</text>
<path d="M784.36,426.61H793.36M788.86,422.11V431.11" stroke="#22dd22" stroke-width="1.3"/>
<text x="790.11" y="410.41" font-family="Liberation Sans" font-size="8" text-anchor="middle" letter-spacing="-1">3</text>
<path d="M785.61,407.53H794.61M790.11,403.03V412.03" stroke="#22dd22" stroke-width="1.3"/>
<text x="800.38" y="394.28" font-family="Liberation Sans" font-size="8" text-anchor="middle" letter-spacing="-1">4</text>
<path d="M795.88,391.4H804.88M800.38,386.9V395.9" stroke="#22dd22" stroke-width="1.3"/>
<text x="817.14" y="385.09" font-family="Liberation Sans" font-size="8" text-anchor="middle" letter-spacing="-1">5</text>
<path d="M812.64,382.21H821.64M817.14,377.71V386.71" stroke="#22dd22" stroke-width="1.3"/>
<text x="836.26" y="385.09" font-family="Liberation Sans" font-size="8" text-anchor="middle" letter-spacing="-1">6</text>
<path d="M831.76,382.21H840.76M836.26,377.71V386.71" stroke="#22dd22" stroke-width="1.3"/>
<text x="853.02" y="394.28" font-family="Liberation Sans" font-size="8" text-anchor="middle" letter-spacing="-1">7</text>
<path d="M848.52,391.4H857.52M853.02,386.9V395.9" stroke="#22dd22" stroke-width="1.3"/>
<text x="863.29" y="410.41" font-family="Liberation Sans" font-size="8" text-anchor="middle" letter-spacing="-1">8</text>
<path d="M858.79,407.53H867.79M863.29,403.03V412.03" stroke="#22dd22" stroke-width="1.3"/>
<text x="864.54" y="429.49" font-family="Liberation Sans" font-size="8" text-anchor="middle" letter-spacing="-1">9</text>
<path d="M860.04,426.61H869.04M864.54,422.11V431.11" stroke="#22dd22" stroke-width="1.3"/>
<text x="856.45" y="446.82" font-family="Liberation Sans" font-size="8" text-anchor="middle" letter-spacing="-1">10</text>
<path d="M851.95,443.94H860.95M856.45,439.44V448.44" stroke="#22dd22" stroke-width="1.3"/>
<circle cx="826.7" cy="419.5" r="15" fill="#fff" stroke="#1a1a1a" stroke-width="1.1"/>
<path d="M821.2,419.5H832.2M826.7,414V425" stroke="#dc1c1c" stroke-width="1.2"/>
<path d="M806.9,552.79L794.15,563.26M805.37,550.73L794.97,557.66M804.06,548.53L793.02,554.38M802.98,546.21L791.4,550.93M802.14,543.8L790.15,547.33M801.54,541.31L785.32,544.36M801.19,538.78L788.74,539.84M801.1,536.22L788.6,536.03M801.27,533.67L788.85,532.23M801.69,531.14L789.48,528.47M802.36,528.67L786.68,523.54M803.28,526.28L791.85,521.23M804.43,524L793.56,517.82M805.81,521.84L795.61,514.61M807.39,519.83L797.97,511.61M809.17,517.99L797.88,505.95M811.12,516.34L803.53,506.41M813.23,514.89L806.67,504.25M815.47,513.66L810.01,502.41M817.82,512.66L813.52,500.92M820.27,511.9L816.17,495.92M822.78,511.39L820.9,499.03M825.32,511.13L824.69,498.65M827.88,511.13L828.51,498.65M830.42,511.39L832.3,499.03M832.93,511.9L837.03,495.92M835.38,512.66L839.68,500.92M837.73,513.66L843.19,502.41M839.97,514.89L846.53,504.25M842.08,516.34L849.67,506.41M844.03,517.99L855.32,505.95M845.81,519.83L855.23,511.61M847.39,521.84L857.59,514.61M848.77,524L859.64,517.82M849.92,526.28L861.35,521.23M850.84,528.67L866.52,523.54M851.51,531.14L863.72,528.47M851.93,533.67L864.35,532.23M852.1,536.22L864.6,536.03M852.01,538.78L864.46,539.84M851.66,541.31L867.88,544.36M851.06,543.8L863.05,547.33M850.22,546.21L861.8,550.93M849.14,548.53L860.18,554.38M847.83,550.73L858.23,557.66M846.3,552.79L859.05,563.26" stroke="#111" stroke-width="1.25"/>
<text x="784.87" y="576.28" font-family="Liberation Sans" font-size="15" text-anchor="middle" letter-spacing="-1.5">1</text>
<path d="M780.37,570.88H789.37M784.87,566.38V575.38" stroke="#22dd22" stroke-width="1.1"/>
<text x="773.53" y="551.97" font-family="Liberation Sans" font-size="15" text-anchor="middle" letter-spacing="-1.5">2</text>
<path d="M769.03,546.57H778.03M773.53,542.07V551.07" stroke="#22dd22" stroke-width="1.1"/>
<text x="775.28" y="525.21" font-family="Liberation Sans" font-size="15" text-anchor="middle" letter-spacing="-1.5">3</text>
<path d="M770.78,519.81H779.78M775.28,515.31V524.31" stroke="#22dd22" stroke-width="1.1"/>
<text x="789.68" y="502.59" font-family="Liberation Sans" font-size="15" text-anchor="middle" letter-spacing="-1.5">4</text>
<path d="M785.18,497.19H794.18M789.68,492.69V501.69" stroke="#22dd22" stroke-width="1.1"/>
<text x="813.19" y="489.69" font-family="Liberation Sans" font-size="15" text-anchor="middle" letter-spacing="-1.5">5</text>
<path d="M808.69,484.29H817.69M813.19,479.79V488.79" stroke="#22dd22" stroke-width="1.1"/>
<text x="840.01" y="489.69" font-family="Liberation Sans" font-size="15" text-anchor="middle" letter-spacing="-1.5">6</text>
<path d="M835.51,484.29H844.51M840.01,479.79V488.79" stroke="#22dd22" stroke-width="1.1"/>
<text x="863.52" y="502.59" font-family="Liberation Sans" font-size="15" text-anchor="middle" letter-spacing="-1.5">7</text>
<path d="M859.02,497.19H868.02M863.52,492.69V501.69" stroke="#22dd22" stroke-width="1.1"/>
<text x="877.92" y="525.21" font-family="Liberation Sans" font-size="15" text-anchor="middle" letter-spacing="-1.5">8</text>
<path d="M873.42,519.81H882.42M877.92,515.31V524.31" stroke="#22dd22" stroke-width="1.1"/>
<text x="879.67" y="551.97" font-family="Liberation Sans" font-size="15" text-anchor="middle" letter-spacing="-1.5">9</text>
<path d="M875.17,546.57H884.17M879.67,542.07V551.07" stroke="#22dd22" stroke-width="1.1"/>
<text x="868.33" y="576.28" font-family="Liberation Sans" font-size="15" text-anchor="middle" letter-spacing="-1.5">10</text>
<path d="M863.83,570.88H872.83M868.33,566.38V575.38" stroke="#22dd22" stroke-width="1.1"/>
<circle cx="826.6" cy="536.6" r="15.3" fill="#fff" stroke="#1a1a1a" stroke-width="1.1"/>
<path d="M821.1,536.6H832.1M826.6,531.1V542.1" stroke="#dc1c1c" stroke-width="1.2"/>
<path d="M1147.7,324.09L1137.65,332.34M1146.17,322.03L1135.35,329.23M1144.86,319.83L1133.37,325.91M1143.78,317.51L1131.74,322.41M1142.94,315.1L1130.47,318.77M1142.34,312.61L1129.56,315.01M1141.99,310.08L1129.04,311.18M1141.9,307.52L1128.9,307.32M1142.07,304.97L1129.16,303.47M1142.49,302.44L1129.79,299.66M1143.16,299.97L1130.81,295.93M1144.08,297.58L1132.19,292.33M1145.23,295.3L1133.93,288.88M1146.61,293.14L1136,285.62M1148.19,291.13L1138.39,282.58M1149.97,289.29L1141.08,279.8M1151.92,287.64L1144.03,277.31M1154.03,286.19L1147.21,275.12M1156.27,284.96L1150.6,273.26M1158.62,283.96L1154.15,271.75M1161.07,283.2L1157.84,270.61M1163.58,282.69L1161.63,269.84M1166.12,282.43L1165.47,269.45M1168.68,282.43L1169.33,269.45M1171.22,282.69L1173.17,269.84M1173.73,283.2L1176.96,270.61M1176.18,283.96L1180.65,271.75M1178.53,284.96L1184.2,273.26M1180.77,286.19L1187.59,275.12M1182.88,287.64L1190.77,277.31M1184.83,289.29L1193.72,279.8M1186.61,291.13L1196.41,282.58M1188.19,293.14L1198.8,285.62M1189.57,295.3L1200.87,288.88M1190.72,297.58L1202.61,292.33M1191.64,299.97L1203.99,295.93M1192.31,302.44L1205.01,299.66M1192.73,304.97L1205.64,303.47M1192.9,307.52L1205.9,307.32M1192.81,310.08L1205.76,311.18M1192.46,312.61L1205.24,315.01M1191.86,315.1L1204.33,318.77M1191.02,317.51L1203.06,322.41M1189.94,319.83L1201.43,325.91M1188.63,322.03L1199.45,329.23M1187.1,324.09L1197.15,332.34" stroke="#111" stroke-width="1.25"/>
<text x="1128.53" y="345.23" font-family="Liberation Sans" font-size="15" text-anchor="middle" letter-spacing="-1.5">1</text>
<path d="M1124.03,339.83H1133.03M1128.53,335.33V344.33" stroke="#22dd22" stroke-width="1.1"/>
<text x="1117.97" y="322.59" font-family="Liberation Sans" font-size="15" text-anchor="middle" letter-spacing="-1.5">2</text>
<path d="M1113.47,317.19H1122.47M1117.97,312.69V321.69" stroke="#22dd22" stroke-width="1.1"/>
<text x="1119.59" y="297.66" font-family="Liberation Sans" font-size="15" text-anchor="middle" letter-spacing="-1.5">3</text>
<path d="M1115.09,292.26H1124.09M1119.59,287.76V296.76" stroke="#22dd22" stroke-width="1.1"/>
<text x="1133.01" y="276.59" font-family="Liberation Sans" font-size="15" text-anchor="middle" letter-spacing="-1.5">4</text>
<path d="M1128.51,271.19H1137.51M1133.01,266.69V275.69" stroke="#22dd22" stroke-width="1.1"/>
<text x="1154.91" y="264.58" font-family="Liberation Sans" font-size="15" text-anchor="middle" letter-spacing="-1.5">5</text>
<path d="M1150.41,259.18H1159.41M1154.91,254.68V263.68" stroke="#22dd22" stroke-width="1.1"/>
<text x="1179.89" y="264.58" font-family="Liberation Sans" font-size="15" text-anchor="middle" letter-spacing="-1.5">6</text>
<path d="M1175.39,259.18H1184.39M1179.89,254.68V263.68" stroke="#22dd22" stroke-width="1.1"/>
<text x="1201.79" y="276.59" font-family="Liberation Sans" font-size="15" text-anchor="middle" letter-spacing="-1.5">7</text>
<path d="M1197.29,271.19H1206.29M1201.79,266.69V275.69" stroke="#22dd22" stroke-width="1.1"/>
<text x="1215.21" y="297.66" font-family="Liberation Sans" font-size="15" text-anchor="middle" letter-spacing="-1.5">8</text>
<path d="M1210.71,292.26H1219.71M1215.21,287.76V296.76" stroke="#22dd22" stroke-width="1.1"/>
<text x="1216.83" y="322.59" font-family="Liberation Sans" font-size="15" text-anchor="middle" letter-spacing="-1.5">9</text>
<path d="M1212.33,317.19H1221.33M1216.83,312.69V321.69" stroke="#22dd22" stroke-width="1.1"/>
<text x="1206.27" y="345.23" font-family="Liberation Sans" font-size="15" text-anchor="middle" letter-spacing="-1.5">10</text>
<path d="M1201.77,339.83H1210.77M1206.27,335.33V344.33" stroke="#22dd22" stroke-width="1.1"/>
<circle cx="1167.4" cy="307.9" r="15.3" fill="#fff" stroke="#1a1a1a" stroke-width="1.1"/>
<path d="M1161.9,307.9H1172.9M1167.4,302.4V313.4" stroke="#dc1c1c" stroke-width="1.2"/>
<path d="M1147.7,435.49L1137.65,443.74M1146.17,433.43L1135.35,440.63M1144.86,431.23L1133.37,437.31M1143.78,428.91L1131.74,433.81M1142.94,426.5L1130.47,430.17M1142.34,424.01L1129.56,426.41M1141.99,421.48L1129.04,422.58M1141.9,418.92L1128.9,418.72M1142.07,416.37L1129.16,414.87M1142.49,413.84L1129.79,411.06M1143.16,411.37L1130.81,407.33M1144.08,408.98L1132.19,403.73M1145.23,406.7L1133.93,400.28M1146.61,404.54L1136,397.02M1148.19,402.53L1138.39,393.98M1149.97,400.69L1141.08,391.2M1151.92,399.04L1144.03,388.71M1154.03,397.59L1147.21,386.52M1156.27,396.36L1150.6,384.66M1158.62,395.36L1154.15,383.15M1161.07,394.6L1157.84,382.01M1163.58,394.09L1161.63,381.24M1166.12,393.83L1165.47,380.85M1168.68,393.83L1169.33,380.85M1171.22,394.09L1173.17,381.24M1173.73,394.6L1176.96,382.01M1176.18,395.36L1180.65,383.15M1178.53,396.36L1184.2,384.66M1180.77,397.59L1187.59,386.52M1182.88,399.04L1190.77,388.71M1184.83,400.69L1193.72,391.2M1186.61,402.53L1196.41,393.98M1188.19,404.54L1198.8,397.02M1189.57,406.7L1200.87,400.28M1190.72,408.98L1202.61,403.73M1191.64,411.37L1203.99,407.33M1192.31,413.84L1205.01,411.06M1192.73,416.37L1205.64,414.87M1192.9,418.92L1205.9,418.72M1192.81,421.48L1205.76,422.58M1192.46,424.01L1205.24,426.41M1191.86,426.5L1204.33,430.17M1191.02,428.91L1203.06,433.81M1189.94,431.23L1201.43,437.31M1188.63,433.43L1199.45,440.63M1187.1,435.49L1197.15,443.74" stroke="#111" stroke-width="1.25"/>
<text x="1128.53" y="456.63" font-family="Liberation Sans" font-size="15" text-anchor="middle" letter-spacing="-1.5">1</text>
<path d="M1124.03,451.23H1133.03M1128.53,446.73V455.73" stroke="#22dd22" stroke-width="1.1"/>
<text x="1117.97" y="433.99" font-family="Liberation Sans" font-size="15" text-anchor="middle" letter-spacing="-1.5">2</text>
<path d="M1113.47,428.59H1122.47M1117.97,424.09V433.09" stroke="#22dd22" stroke-width="1.1"/>
<text x="1119.59" y="409.06" font-family="Liberation Sans" font-size="15" text-anchor="middle" letter-spacing="-1.5">3</text>
<path d="M1115.09,403.66H1124.09M1119.59,399.16V408.16" stroke="#22dd22" stroke-width="1.1"/>
<text x="1133.01" y="387.99" font-family="Liberation Sans" font-size="15" text-anchor="middle" letter-spacing="-1.5">4</text>
<path d="M1128.51,382.59H1137.51M1133.01,378.09V387.09" stroke="#22dd22" stroke-width="1.1"/>
<text x="1154.91" y="375.98" font-family="Liberation Sans" font-size="15" text-anchor="middle" letter-spacing="-1.5">5</text>
<path d="M1150.41,370.58H1159.41M1154.91,366.08V375.08" stroke="#22dd22" stroke-width="1.1"/>
<text x="1179.89" y="375.98" font-family="Liberation Sans" font-size="15" text-anchor="middle" letter-spacing="-1.5">6</text>
<path d="M1175.39,370.58H1184.39M1179.89,366.08V375.08" stroke="#22dd22" stroke-width="1.1"/>
<text x="1201.79" y="387.99" font-family="Liberation Sans" font-size="15" text-anchor="middle" letter-spacing="-1.5">7</text>
<path d="M1197.29,382.59H1206.29M1201.79,378.09V387.09" stroke="#22dd22" stroke-width="1.1"/>
<text x="1215.21" y="409.06" font-family="Liberation Sans" font-size="15" text-anchor="middle" letter-spacing="-1.5">8</text>
<path d="M1210.71,403.66H1219.71M1215.21,399.16V408.16" stroke="#22dd22" stroke-width="1.1"/>
<text x="1216.83" y="433.99" font-family="Liberation Sans" font-size="15" text-anchor="middle" letter-spacing="-1.5">9</text>
<path d="M1212.33,428.59H1221.33M1216.83,424.09V433.09" stroke="#22dd22" stroke-width="1.1"/>
<text x="1206.27" y="456.63" font-family="Liberation Sans" font-size="15" text-anchor="middle" letter-spacing="-1.5">10</text>
<path d="M1201.77,451.23H1210.77M1206.27,446.73V455.73" stroke="#22dd22" stroke-width="1.1"/>
<circle cx="1167.4" cy="419.3" r="15.3" fill="#fff" stroke="#1a1a1a" stroke-width="1.1"/>
<path d="M1161.9,419.3H1172.9M1167.4,413.8V424.8" stroke="#dc1c1c" stroke-width="1.2"/>
<path d="M1147.5,552.49L1137.45,560.74M1145.97,550.43L1135.15,557.63M1144.66,548.23L1133.17,554.31M1143.58,545.91L1131.54,550.81M1142.74,543.5L1130.27,547.17M1142.14,541.01L1129.36,543.41M1141.79,538.48L1128.84,539.58M1141.7,535.92L1128.7,535.72M1141.87,533.37L1128.96,531.87M1142.29,530.84L1129.59,528.06M1142.96,528.37L1130.61,524.33M1143.88,525.98L1131.99,520.73M1145.03,523.7L1133.73,517.28M1146.41,521.54L1135.8,514.02M1147.99,519.53L1138.19,510.98M1149.77,517.69L1140.88,508.2M1151.72,516.04L1143.83,505.71M1153.83,514.59L1147.01,503.52M1156.07,513.36L1150.4,501.66M1158.42,512.36L1153.95,500.15M1160.87,511.6L1157.64,499.01M1163.38,511.09L1161.43,498.24M1165.92,510.83L1165.27,497.85M1168.48,510.83L1169.13,497.85M1171.02,511.09L1172.97,498.24M1173.53,511.6L1176.76,499.01M1175.98,512.36L1180.45,500.15M1178.33,513.36L1184,501.66M1180.57,514.59L1187.39,503.52M1182.68,516.04L1190.57,505.71M1184.63,517.69L1193.52,508.2M1186.41,519.53L1196.21,510.98M1187.99,521.54L1198.6,514.02M1189.37,523.7L1200.67,517.28M1190.52,525.98L1202.41,520.73M1191.44,528.37L1203.79,524.33M1192.11,530.84L1204.81,528.06M1192.53,533.37L1205.44,531.87M1192.7,535.92L1205.7,535.72M1192.61,538.48L1205.56,539.58M1192.26,541.01L1205.04,543.41M1191.66,543.5L1204.13,547.17M1190.82,545.91L1202.86,550.81M1189.74,548.23L1201.23,554.31M1188.43,550.43L1199.25,557.63M1186.9,552.49L1196.95,560.74" stroke="#111" stroke-width="1.25"/>
<text x="1128.33" y="573.63" font-family="Liberation Sans" font-size="15" text-anchor="middle" letter-spacing="-1.5">1</text>
<path d="M1123.83,568.23H1132.83M1128.33,563.73V572.73" stroke="#22dd22" stroke-width="1.1"/>
<text x="1117.77" y="550.99" font-family="Liberation Sans" font-size="15" text-anchor="middle" letter-spacing="-1.5">2</text>
<path d="M1113.27,545.59H1122.27M1117.77,541.09V550.09" stroke="#22dd22" stroke-width="1.1"/>
<text x="1119.39" y="526.06" font-family="Liberation Sans" font-size="15" text-anchor="middle" letter-spacing="-1.5">3</text>
<path d="M1114.89,520.66H1123.89M1119.39,516.16V525.16" stroke="#22dd22" stroke-width="1.1"/>
<text x="1132.81" y="504.99" font-family="Liberation Sans" font-size="15" text-anchor="middle" letter-spacing="-1.5">4</text>
<path d="M1128.31,499.59H1137.31M1132.81,495.09V504.09" stroke="#22dd22" stroke-width="1.1"/>
<text x="1154.71" y="492.98" font-family="Liberation Sans" font-size="15" text-anchor="middle" letter-spacing="-1.5">5</text>
<path d="M1150.21,487.58H1159.21M1154.71,483.08V492.08" stroke="#22dd22" stroke-width="1.1"/>
<text x="1179.69" y="492.98" font-family="Liberation Sans" font-size="15" text-anchor="middle" letter-spacing="-1.5">6</text>
<path d="M1175.19,487.58H1184.19M1179.69,483.08V492.08" stroke="#22dd22" stroke-width="1.1"/>
<text x="1201.59" y="504.99" font-family="Liberation Sans" font-size="15" text-anchor="middle" letter-spacing="-1.5">7</text>
<path d="M1197.09,499.59H1206.09M1201.59,495.09V504.09" stroke="#22dd22" stroke-width="1.1"/>
<text x="1215.01" y="526.06" font-family="Liberation Sans" font-size="15" text-anchor="middle" letter-spacing="-1.5">8</text>
<path d="M1210.51,520.66H1219.51M1215.01,516.16V525.16" stroke="#22dd22" stroke-width="1.1"/>
<text x="1216.63" y="550.99" font-family="Liberation Sans" font-size="15" text-anchor="middle" letter-spacing="-1.5">9</text>
<path d="M1212.13,545.59H1221.13M1216.63,541.09V550.09" stroke="#22dd22" stroke-width="1.1"/>
<text x="1206.07" y="573.63" font-family="Liberation Sans" font-size="15" text-anchor="middle" letter-spacing="-1.5">10</text>
<path d="M1201.57,568.23H1210.57M1206.07,563.73V572.73" stroke="#22dd22" stroke-width="1.1"/>
<circle cx="1167.2" cy="536.3" r="15.3" fill="#fff" stroke="#1a1a1a" stroke-width="1.1"/>
<path d="M1161.7,536.3H1172.7M1167.2,530.8V541.8" stroke="#dc1c1c" stroke-width="1.2"/>
<path d="M278,387.5H1235" stroke="#151515" stroke-width="1.1"/>
<path d="M1124.5,147V785" stroke="#000" stroke-width="1.3"/>
<circle cx="276.5" cy="609.3" r="6" fill="none" stroke="#1010d0" stroke-width="1.2"/>
<path d="M277,609.3H286" stroke="#1010c0" stroke-width="1.2"/>
</g>
<path d="M779.5,154.5V164.5L781.5,162.5L783.5,166.5L785.5,165.5L783.5,161.5H786.5Z" fill="#fff" stroke="#000" stroke-width="1"/>
<rect x="1242" y="150" width="6" height="631" rx="3" fill="#b0b2b4"/>
<rect x="1242" y="309.5" width="6" height="363.5" rx="3" fill="#3daee9"/>
<rect x="281" y="792" width="950" height="6" rx="3" fill="#b0b2b4"/>
<rect x="520" y="792" width="464" height="6" rx="3" fill="#3daee9"/>
</svg>
<!-- right dock -->
<div class="a" style="left:1262px;top:102px;width:5px;height:710px;background:#dadbdc"></div>
<div class="a" style="left:1267px;top:103px;width:260px;height:26px;background:linear-gradient(#d6d7d8,#c4c5c6 80%,#d0d1d2);border-left:1px solid #bcbdbe;border-top:1px solid #bcbdbe"></div>
<div class="t" style="left:1272px;top:108px">Macro objects</div>
<svg class="a" style="left:1501px;top:108px" width="14" height="14"><rect x="1.5" y="1.5" width="11" height="11" rx="1.5" fill="#fff" stroke="#000" stroke-width="1.3"/><path d="M4,4L10,10M10,4L4,10" stroke="#000" stroke-width="2.2"/></svg>
<div class="a" style="left:1267px;top:129px;width:260px;height:683px;border-left:1px solid #bcbdbe;border-bottom:1px solid #bcbdbe;background:#eff0f1"></div>
<div class="t" style="left:1278px;top:146px">Objects</div>
<div class="a" style="left:1345px;top:139px;width:92px;height:30px;background:linear-gradient(#e6e6e6,#cfcfcf)"></div>
<svg class="a" style="left:1345px;top:139px" width="92" height="30">
  <path d="M10,23L22,9L25,12L13,25Z" fill="#e0203a" stroke="#a01020" stroke-width="0.6"/><path d="M10,23L9,26L12,25Z" fill="#333"/>
  <path d="M40,10L51,21M51,10L40,21" stroke="#d81e1e" stroke-width="3"/>
  <path d="M67,12H72L73,13H80V25H67Z" fill="#c81818"/><path d="M69,16H84L80,25H67Z" fill="#ee3030"/>
  <path d="M78,8H81V11H84V14H81V17H78V14H75V11H78Z" fill="#4aa8f0" stroke="#1c4fa0" stroke-width="0.8"/>
</svg>
<div class="a" style="left:1268px;top:179px;width:238px;height:214px;background:#fcfcfc;overflow:hidden">
</div>
<div class="a" style="left:1268px;top:179px;width:238px;height:214px;overflow:hidden">
<div class="a" style="left:-1268px;top:-179px;width:1539px;height:844px">
<svg class="a" style="left:1293px;top:169px" width="10" height="12"><path d="M2.5,1.5L7,6L2.5,10.5" fill="none" stroke="#31363b" stroke-width="1.2"/></svg>
<svg class="a" style="left:1319px;top:167px" width="16" height="17"><path d="M0,0H4L5,1H15V16H0Z" fill="#b81c10"/><path d="M1,2H15V16H1Z" fill="#e8321c"/><path d="M1,2H15V4H1Z" fill="#f05a3a"/><path d="M0,1V16" stroke="#9a1408" stroke-width="1.5"/></svg>
<div class="t" style="left:1340px;top:167px">Fan</div>
<svg class="a" style="left:1293px;top:193px" width="10" height="12"><path d="M2.5,1.5L7,6L2.5,10.5" fill="none" stroke="#31363b" stroke-width="1.2"/></svg>
<svg class="a" style="left:1319px;top:191px" width="16" height="17"><path d="M0,0H4L5,1H15V16H0Z" fill="#b81c10"/><path d="M1,2H15V16H1Z" fill="#e8321c"/><path d="M1,2H15V4H1Z" fill="#f05a3a"/><path d="M0,1V16" stroke="#9a1408" stroke-width="1.5"/></svg>
<div class="t" style="left:1340px;top:191px">Hirschmann</div>
<svg class="a" style="left:1293px;top:217px" width="10" height="12"><path d="M2.5,1.5L7,6L2.5,10.5" fill="none" stroke="#31363b" stroke-width="1.2"/></svg>
<svg class="a" style="left:1319px;top:215px" width="16" height="17"><path d="M0,0H4L5,1H15V16H0Z" fill="#b81c10"/><path d="M1,2H15V16H1Z" fill="#e8321c"/><path d="M1,2H15V4H1Z" fill="#f05a3a"/><path d="M0,1V16" stroke="#9a1408" stroke-width="1.5"/></svg>
<div class="t" style="left:1340px;top:215px">Other connectors</div>
<svg class="a" style="left:1293px;top:241px" width="10" height="12"><path d="M2.5,1.5L7,6L2.5,10.5" fill="none" stroke="#31363b" stroke-width="1.2"/></svg>
<svg class="a" style="left:1319px;top:239px" width="16" height="17"><path d="M0,0H4L5,1H15V16H0Z" fill="#b81c10"/><path d="M1,2H15V16H1Z" fill="#e8321c"/><path d="M1,2H15V4H1Z" fill="#f05a3a"/><path d="M0,1V16" stroke="#9a1408" stroke-width="1.5"/></svg>
<div class="t" style="left:1340px;top:239px">Phoenix</div>
<svg class="a" style="left:1293px;top:265px" width="10" height="12"><path d="M2.5,1.5L7,6L2.5,10.5" fill="none" stroke="#31363b" stroke-width="1.2"/></svg>
<svg class="a" style="left:1319px;top:263px" width="16" height="17"><path d="M0,0H4L5,1H15V16H0Z" fill="#b81c10"/><path d="M1,2H15V16H1Z" fill="#e8321c"/><path d="M1,2H15V4H1Z" fill="#f05a3a"/><path d="M0,1V16" stroke="#9a1408" stroke-width="1.5"/></svg>
<div class="t" style="left:1340px;top:263px">Sockets</div>
<svg class="a" style="left:1293px;top:289px" width="10" height="12"><path d="M2.5,1.5L7,6L2.5,10.5" fill="none" stroke="#31363b" stroke-width="1.2"/></svg>
<svg class="a" style="left:1319px;top:287px" width="16" height="17"><path d="M0,0H4L5,1H15V16H0Z" fill="#b81c10"/><path d="M1,2H15V16H1Z" fill="#e8321c"/><path d="M1,2H15V4H1Z" fill="#f05a3a"/><path d="M0,1V16" stroke="#9a1408" stroke-width="1.5"/></svg>
<div class="t" style="left:1340px;top:287px">SubD-Connector</div>
<svg class="a" style="left:1293px;top:313px" width="10" height="12"><path d="M2.5,1.5L7,6L2.5,10.5" fill="none" stroke="#31363b" stroke-width="1.2"/></svg>
<svg class="a" style="left:1319px;top:311px" width="16" height="17"><path d="M0,0H4L5,1H15V16H0Z" fill="#b81c10"/><path d="M1,2H15V16H1Z" fill="#e8321c"/><path d="M1,2H15V4H1Z" fill="#f05a3a"/><path d="M0,1V16" stroke="#9a1408" stroke-width="1.5"/></svg>
<div class="t" style="left:1340px;top:311px">Switches &amp; Buttons</div>
<svg class="a" style="left:1293px;top:337px" width="10" height="12"><path d="M2.5,1.5L7,6L2.5,10.5" fill="none" stroke="#31363b" stroke-width="1.2"/></svg>
<svg class="a" style="left:1319px;top:335px" width="16" height="17"><path d="M0,0H4L5,1H15V16H0Z" fill="#b81c10"/><path d="M1,2H15V16H1Z" fill="#e8321c"/><path d="M1,2H15V4H1Z" fill="#f05a3a"/><path d="M0,1V16" stroke="#9a1408" stroke-width="1.5"/></svg>
<div class="t" style="left:1340px;top:335px">XLR-Connector</div>
<svg class="a" style="left:1304px;top:359px" width="16" height="17"><path d="M0,0H4L5,1H15V16H0Z" fill="#b81c10"/><path d="M1,2H15V16H1Z" fill="#e8321c"/><path d="M1,2H15V4H1Z" fill="#f05a3a"/><path d="M0,1V16" stroke="#9a1408" stroke-width="1.5"/></svg>
<div class="t" style="left:1325px;top:359px">User</div>
</div></div>
<div class="a" style="left:1513px;top:182px;width:6px;height:208px;border-radius:3px;background:#b0b2b4"></div>
<div class="a" style="left:1513px;top:247px;width:6px;height:143px;border-radius:3px;background:#3daee9"></div>
<div class="t" style="left:1278px;top:411px">Preview</div>
<div class="a" style="left:1268px;top:437px;width:259px;height:374px;background:#fff"></div>
<!-- status -->
<div class="t" style="left:13px;top:818px">X(225,91), Y(53,48)</div>
<div class="t" style="left:166px;top:818px">mm</div>
<svg class="a" style="left:192px;top:821px" width="9" height="6"><path d="M0,0H8L4,5Z" fill="#111"/></svg>
<div class="t" style="left:382px;top:818px">Grid:Off</div>
<svg class="a" style="left:497px;top:821px" width="9" height="6"><path d="M0,0H8L4,5Z" fill="#111"/></svg>
<!-- right edge desktop bits -->
<div class="a" style="left:1527px;top:0;width:12px;height:844px;background:#25282c"></div>
<div class="a" style="left:1528px;top:27px;width:11px;height:30px;background:#dcdcdc"></div>
<div class="a" style="left:1537px;top:76px;width:6px;height:10px;border-radius:5px;background:#888"></div>
<div class="a" style="left:1527px;top:104px;width:12px;height:24px;background:#4a4fc0"></div>
<div class="a" style="left:1527px;top:497px;width:12px;height:14px;background:#c03030"></div>
<div class="a" style="left:1527px;top:590px;width:12px;height:35px;background:#30343a"></div>
<div class="a" style="left:1526px;top:596px;width:16px;height:16px;border-radius:8px;background:#bbb"></div>
<div class="a" style="left:0;top:836px;width:1539px;height:8px;background:#111315"></div>
<div class="a" style="left:828px;top:836px;width:6px;height:8px;background:#3e4042"></div>
<div class="a" style="left:841px;top:836px;width:698px;height:8px;background:linear-gradient(to right,#505050,#767676 80px,#8c8c8c)"></div>
<div class="a" style="left:1527px;top:649px;width:12px;height:195px;background:linear-gradient(to right,#4a4a4a,#8a8a8a)"></div>
<div class="a" style="left:0;top:0;width:8px;height:844px;background:#1b1d20"></div>
<div class="a" style="left:1px;top:16px;width:6px;height:2px;background:#d0d0d0"></div>
<svg class="a" style="left:2px;top:36px" width="6" height="16"><path d="M1.5,1Q5,8 1.5,15" fill="none" stroke="#8a9aa8" stroke-width="1.2"/></svg>
<div class="a" style="left:1px;top:61px;width:6px;height:2px;background:#d0d0d0"></div>
<svg class="a" style="left:2px;top:81px" width="6" height="16"><path d="M1.5,1Q5,8 1.5,15" fill="none" stroke="#8a9aa8" stroke-width="1.2"/></svg>
<div class="a" style="left:1px;top:106px;width:6px;height:2px;background:#d0d0d0"></div>
<svg class="a" style="left:2px;top:126px" width="6" height="16"><path d="M1.5,1Q5,8 1.5,15" fill="none" stroke="#8a9aa8" stroke-width="1.2"/></svg>
<div class="a" style="left:1px;top:151px;width:6px;height:2px;background:#d0d0d0"></div>
<svg class="a" style="left:2px;top:171px" width="6" height="16"><path d="M1.5,1Q5,8 1.5,15" fill="none" stroke="#8a9aa8" stroke-width="1.2"/></svg>
<div class="a" style="left:1px;top:196px;width:6px;height:2px;background:#d0d0d0"></div>
<svg class="a" style="left:2px;top:216px" width="6" height="16"><path d="M1.5,1Q5,8 1.5,15" fill="none" stroke="#8a9aa8" stroke-width="1.2"/></svg>
<div class="a" style="left:1px;top:241px;width:6px;height:2px;background:#d0d0d0"></div>
<svg class="a" style="left:2px;top:261px" width="6" height="16"><path d="M1.5,1Q5,8 1.5,15" fill="none" stroke="#8a9aa8" stroke-width="1.2"/></svg>
<div class="a" style="left:1px;top:286px;width:6px;height:2px;background:#d0d0d0"></div>
<svg class="a" style="left:2px;top:306px" width="6" height="16"><path d="M1.5,1Q5,8 1.5,15" fill="none" stroke="#8a9aa8" stroke-width="1.2"/></svg>
<div class="a" style="left:1px;top:331px;width:6px;height:2px;background:#d0d0d0"></div>
<svg class="a" style="left:2px;top:351px" width="6" height="16"><path d="M1.5,1Q5,8 1.5,15" fill="none" stroke="#8a9aa8" stroke-width="1.2"/></svg>
<div class="a" style="left:1px;top:376px;width:6px;height:2px;background:#d0d0d0"></div>
<svg class="a" style="left:2px;top:396px" width="6" height="16"><path d="M1.5,1Q5,8 1.5,15" fill="none" stroke="#8a9aa8" stroke-width="1.2"/></svg>
<div class="a" style="left:1px;top:421px;width:6px;height:2px;background:#d0d0d0"></div>
<svg class="a" style="left:2px;top:441px" width="6" height="16"><path d="M1.5,1Q5,8 1.5,15" fill="none" stroke="#8a9aa8" stroke-width="1.2"/></svg>
<div class="a" style="left:1px;top:466px;width:6px;height:2px;background:#d0d0d0"></div>
<svg class="a" style="left:2px;top:486px" width="6" height="16"><path d="M1.5,1Q5,8 1.5,15" fill="none" stroke="#8a9aa8" stroke-width="1.2"/></svg>
<div class="a" style="left:1px;top:511px;width:6px;height:2px;background:#d0d0d0"></div>
<svg class="a" style="left:2px;top:531px" width="6" height="16"><path d="M1.5,1Q5,8 1.5,15" fill="none" stroke="#8a9aa8" stroke-width="1.2"/></svg>
<div class="a" style="left:1px;top:556px;width:6px;height:2px;background:#d0d0d0"></div>
<svg class="a" style="left:2px;top:576px" width="6" height="16"><path d="M1.5,1Q5,8 1.5,15" fill="none" stroke="#8a9aa8" stroke-width="1.2"/></svg>
<div class="a" style="left:1px;top:601px;width:6px;height:2px;background:#d0d0d0"></div>
<svg class="a" style="left:2px;top:621px" width="6" height="16"><path d="M1.5,1Q5,8 1.5,15" fill="none" stroke="#8a9aa8" stroke-width="1.2"/></svg>
<div class="a" style="left:1px;top:646px;width:6px;height:2px;background:#d0d0d0"></div>
<svg class="a" style="left:2px;top:666px" width="6" height="16"><path d="M1.5,1Q5,8 1.5,15" fill="none" stroke="#8a9aa8" stroke-width="1.2"/></svg>
<div class="a" style="left:1px;top:691px;width:6px;height:2px;background:#d0d0d0"></div>
<svg class="a" style="left:2px;top:711px" width="6" height="16"><path d="M1.5,1Q5,8 1.5,15" fill="none" stroke="#8a9aa8" stroke-width="1.2"/></svg>
<div class="a" style="left:1px;top:736px;width:6px;height:2px;background:#d0d0d0"></div>
<svg class="a" style="left:2px;top:756px" width="6" height="16"><path d="M1.5,1Q5,8 1.5,15" fill="none" stroke="#8a9aa8" stroke-width="1.2"/></svg>
<div class="a" style="left:1px;top:781px;width:6px;height:2px;background:#d0d0d0"></div>
<svg class="a" style="left:2px;top:801px" width="6" height="16"><path d="M1.5,1Q5,8 1.5,15" fill="none" stroke="#8a9aa8" stroke-width="1.2"/></svg>
<div class="a" style="left:1px;top:826px;width:6px;height:2px;background:#d0d0d0"></div>
</body></html>
